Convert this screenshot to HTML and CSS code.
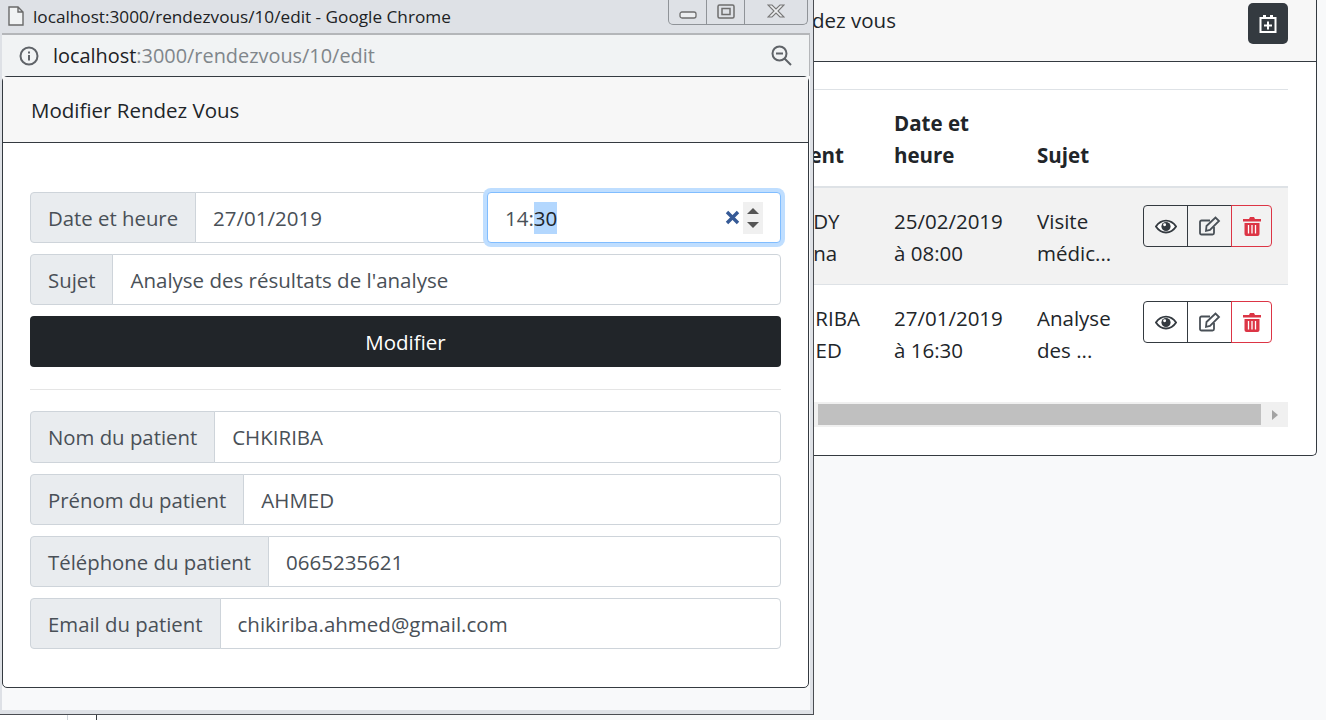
FILE: index.html
```html
<!DOCTYPE html>
<html lang="fr">
<head>
    <meta charset="UTF-8">
    <title>Modifier Rendez Vous</title>
    <link rel="stylesheet" href="styles.css">
</head>
<body>
    <div class="page">
        <aside class="side"><div class="side-cell"></div></aside>
        <main class="main">
            <section class="card list-card">
                <header class="card-header list-header">
                    <span>Les Rendez vous</span>
                    <button class="btn-add">
                        <svg width="18" height="20" viewBox="0 0 18 20">
                            <path d="M1.5 4h15v14h-15z" fill="#343a40" stroke="#fff" stroke-width="2"/>
                            <path d="M4 1h3v4H4zM11 1h3v4h-3z" fill="#fff"/>
                            <path d="M9 7.5v8M5 11.5h8" stroke="#fff" stroke-width="2"/>
                        </svg>
                    </button>
                </header>
                <div class="list-body">
                    <table class="table">
                        <thead>
                            <tr>
                                <th class="col-patient">Patient</th>
                                <th class="col-date">Date et heure</th>
                                <th class="col-subject">Sujet</th>
                                <th class="col-actions"></th>
                            </tr>
                        </thead>
                        <tbody>
                            <tr class="striped">
                                <td>BOUDY Hanina</td>
                                <td>25/02/2019 à 08:00</td>
                                <td>Visite médic...</td>
                                <td class="cell-actions">
                                    <div class="btn-group">
                                        <button class="btn-icon"><svg width="22" height="15" viewBox="0 0 24 16"><use href="#i-eye"/></svg></button>
                                        <button class="btn-icon"><svg width="22" height="20" viewBox="0 0 22 20"><use href="#i-edit"/></svg></button>
                                        <button class="btn-icon danger"><svg width="18" height="20" viewBox="0 0 18 20"><use href="#i-trash"/></svg></button>
                                    </div>
                                </td>
                            </tr>
                            <tr>
                                <td>CHKIRIBA AHMED</td>
                                <td>27/01/2019 à 16:30</td>
                                <td>Analyse des ...</td>
                                <td class="cell-actions">
                                    <div class="btn-group">
                                        <button class="btn-icon"><svg width="22" height="15" viewBox="0 0 24 16"><use href="#i-eye"/></svg></button>
                                        <button class="btn-icon"><svg width="22" height="20" viewBox="0 0 22 20"><use href="#i-edit"/></svg></button>
                                        <button class="btn-icon danger"><svg width="18" height="20" viewBox="0 0 18 20"><use href="#i-trash"/></svg></button>
                                    </div>
                                </td>
                            </tr>
                        </tbody>
                    </table>
                    <div class="scrollbar">
                        <div class="scroll-thumb"></div>
                        <div class="scroll-arrow"></div>
                    </div>
                </div>
            </section>
        </main>
    </div>

    <div class="window">
        <div class="titlebar">
            <svg class="file-icon" width="16" height="20" viewBox="0 0 16 20">
                <path d="M1 1h9l5 5v13H1z M10 1v5h5" fill="#f1f3f4" stroke="#6a6a6a" stroke-width="1.4"/>
            </svg>
            <span class="title-text">localhost:3000/rendezvous/10/edit - Google Chrome</span>
            <div class="win-controls">
                <div class="win-btn win-min">
                    <svg width="18" height="8" viewBox="0 0 18 8"><rect x="1" y="1" width="16" height="6" rx="2" fill="#eceef0" stroke="#6e6e6e" stroke-width="1.3"/></svg>
                </div>
                <div class="win-btn">
                    <svg width="18" height="15" viewBox="0 0 18 15"><rect x="1" y="1" width="16" height="13" rx="1.5" fill="none" stroke="#6e6e6e" stroke-width="1.5"/><rect x="5" y="4.5" width="8" height="6" fill="none" stroke="#6e6e6e" stroke-width="1.5"/></svg>
                </div>
                <div class="win-btn win-close">
                    <svg width="18" height="14" viewBox="0 0 18 14"><path d="M1 1h4l4 4 4-4h4l-6 6 6 6h-4l-4-4-4 4H1l6-6z" fill="#eceef0" stroke="#777" stroke-width="1.1"/></svg>
                </div>
            </div>
        </div>
        <div class="viewport">
            <div class="addressbar">
                <svg class="info-icon" width="20" height="20" viewBox="0 0 20 20">
                    <circle cx="10" cy="10" r="8.5" fill="none" stroke="#5f6368" stroke-width="2"/>
                    <path d="M10 9v5.5M10 5.5v2" stroke="#5f6368" stroke-width="2"/>
                </svg>
                <span class="url"><span class="url-host">localhost</span>:3000/rendezvous/10/edit</span>
                <svg class="zoom-icon" width="21" height="21" viewBox="0 0 21 21">
                    <circle cx="8.5" cy="8.5" r="7" fill="none" stroke="#5f6368" stroke-width="2"/>
                    <path d="M5 8.5h7M13.5 13.5l6.5 6.5" stroke="#5f6368" stroke-width="2"/>
                </svg>
            </div>
            <section class="card edit-card">
                <header class="card-header edit-header">Modifier Rendez Vous</header>
                <div class="edit-body">
                    <div class="input-group">
                        <span class="addon">Date et heure</span>
                        <input class="field" type="text" value="27/01/2019">
                        <div class="field time-field">
                            <span>14:<span class="selected">30</span></span>
                            <svg class="clear-icon" width="15" height="15" viewBox="0 0 15 15">
                                <path d="M2 2l11 11M13 2L2 13" stroke="#365a96" stroke-width="3.4"/>
                            </svg>
                            <div class="spinner">
                                <span class="spin-up"></span>
                                <span class="spin-down"></span>
                            </div>
                        </div>
                    </div>
                    <div class="input-group">
                        <span class="addon">Sujet</span>
                        <input class="field" type="text" value="Analyse des résultats de l'analyse">
                    </div>
                    <button class="btn-submit">Modifier</button>
                    <hr class="divider">
                    <div class="input-group tall">
                        <span class="addon">Nom du patient</span>
                        <input class="field" type="text" value="CHKIRIBA">
                    </div>
                    <div class="input-group">
                        <span class="addon">Prénom du patient</span>
                        <input class="field" type="text" value="AHMED">
                    </div>
                    <div class="input-group">
                        <span class="addon">Téléphone du patient</span>
                        <input class="field" type="text" value="0665235621">
                    </div>
                    <div class="input-group">
                        <span class="addon">Email du patient</span>
                        <input class="field" type="text" value="chikiriba.ahmed@gmail.com">
                    </div>
                </div>
            </section>
        </div>
    </div>

    <svg class="icon-defs" width="0" height="0">
        <defs>
            <g id="i-eye">
                <path d="M1 8C4 3.5 8 1.5 12 1.5S20 3.5 23 8c-3 4.5-7 6.5-11 6.5S4 12.500 1 8z" fill="#fff" stroke="#343a40" stroke-width="2"/>
                <circle cx="12" cy="8" r="5" fill="#343a40"/>
                <circle cx="10.500" cy="6" r="1.600" fill="#fff"/>
            </g>
            <g id="i-edit">
                <path d="M15 11v6a1.500 1.500 0 0 1-1.500 1.500h-11A1.500 1.500 0 0 1 1 17V6a1.500 1.500 0 0 1 1.500-1.500H11" fill="none" stroke="#495057" stroke-width="1.800"/>
                <path d="M7.500 10l9-8.500 3.500 3.500-9 9-4 .8z" fill="none" stroke="#495057" stroke-width="1.800"/>
            </g>
            <g id="i-trash">
                <path d="M0 3h6l1-2h4l1 2h6v2.500H0z" fill="#dc3545"/>
                <path d="M1.500 7h15v11a2 2 0 0 1-2 2h-11a2 2 0 0 1-2-2z" fill="#dc3545"/>
                <path d="M5.500 9v8.500M9 9v8.500M12.500 9v8.500" stroke="#fff" stroke-width="1.300"/>
            </g>
        </defs>
    </svg>
</body>
</html>
```

FILE: styles.css
```css
* {
    box-sizing: border-box;
}

html,
body {
    margin: 0;
    height: 720px;
    overflow: hidden;
}

body {
    font-family: "Open Sans", "Noto Sans", sans-serif;
    font-size: 20.5px;
    line-height: 32px;
    color: #212529;
    background-color: #f8f9fa;
    position: relative;
}

.icon-defs {
    display: block;
}

/* page behind the popup */
.page {
    display: flex;
    height: 720px;
}

.side {
    width: 97px;
    background-color: #fff;
    border-right: 1px solid #343a40;
}

.side-cell {
    width: 68px;
    height: 100%;
    border-right: 1px solid #ced4da;
}

.main {
    flex: 1;
    padding: 0 9px 0 625px;
}

.card {
    background-color: #fff;
    border: 1px solid #343a40;
    border-radius: 5px;
}

.card-header {
    background-color: #f7f7f7;
    border-bottom: 1px solid #343a40;
}

.list-card {
    border-top: none;
    border-radius: 0 0 5px 5px;
    height: 456px;
}

.list-header {
    height: 62px;
    display: flex;
    justify-content: space-between;
    padding: 3px 28px 0 15px;
    line-height: 34px;
}

.btn-add {
    width: 40px;
    height: 41px;
    padding: 0;
    background-color: #343a40;
    border: none;
    border-radius: 5px;
    display: flex;
    align-items: center;
    justify-content: center;
}

.list-body {
    padding: 27px 28px 0;
}

.table {
    width: 537px;
    border-collapse: collapse;
    table-layout: fixed;
    border-top: 1px solid #dee2e6;
}

.table th,
.table td {
    padding: 17px 15px 15px;
    text-align: left;
    vertical-align: top;
}

.table th {
    vertical-align: bottom;
    font-weight: 700;
    border-bottom: 2px solid #dee2e6;
}

.table th:first-child,
.table td:first-child {
    padding-left: 18px;
}

.table tbody tr + tr td {
    border-top: 1px solid #dee2e6;
}

.table .cell-actions {
    padding-top: 16px;
}

.striped {
    background-color: #f2f2f2;
}

.col-patient {
    width: 128px;
}

.col-date {
    width: 143px;
}

.col-subject {
    width: 106px;
}

.col-actions {
    width: 160px;
}

.btn-group {
    display: flex;
    width: 129px;
    height: 42px;
}

.striped .btn-group {
    margin-top: 1px;
}

.btn-icon {
    flex: none;
    width: 45px;
    padding: 0;
    background: none;
    border: 1px solid #343a40;
    margin-left: -1px;
    display: flex;
    align-items: center;
    justify-content: center;
}

.btn-icon:first-child {
    margin-left: 0;
    border-radius: 4px 0 0 4px;
}

.btn-icon.danger {
    flex: 1;
    width: auto;
    border-color: #dc3545;
    border-radius: 0 4px 4px 0;
}

.scrollbar {
    width: 537px;
    height: 25px;
    margin-top: 21px;
    padding: 2px 0 2px 67px;
    background-color: #f0f0f0;
    display: flex;
    align-items: center;
}

.scroll-thumb {
    width: 443px;
    height: 21px;
    background-color: #c0c0c0;
}

.scroll-arrow {
    margin-left: 11px;
    border-left: 6px solid #a3a3a3;
    border-top: 5px solid transparent;
    border-bottom: 5px solid transparent;
}

/* popup window */
.window {
    position: absolute;
    top: 0;
    left: 0;
    width: 814px;
    height: 715px;
    display: flex;
    flex-direction: column;
    background-color: #dee1e6;
    border-right: 1px solid #4a4d52;
    border-bottom: 1px solid #4a4d52;
}

.titlebar {
    height: 33px;
    display: flex;
    align-items: flex-start;
    flex-shrink: 0;
    color: #202124;
}

.file-icon {
    margin: 6px 0 0 8px;
}

.title-text {
    font-size: 17.2px;
    line-height: 20px;
    margin: 7px 0 0 9px;
}

.win-controls {
    display: flex;
    margin-left: auto;
    margin-right: 5px;
    height: 25px;
    width: 140px;
    border: 1px solid #8f9398;
    border-top: none;
    border-radius: 0 0 5px 5px;
}

.win-btn {
    width: 38px;
    display: flex;
    align-items: center;
    justify-content: center;
    padding-bottom: 2px;
    border-right: 1px solid #8f9398;
}

.win-min {
    align-items: flex-end;
    padding-bottom: 5px;
}

.win-close {
    flex: 1;
    border-right: none;
}

.viewport {
    flex: 1;
    margin: 0 3px 4px 2px;
    background-color: #f8f9fa;
}

.addressbar {
    height: 43px;
    display: flex;
    align-items: center;
    padding: 0 17px;
    background-color: #f1f3f4;
    border-top: 2px solid #b4b6b9;
    border-right: 1px solid #b4b6b9;
}

.url {
    margin-left: 14px;
    font-size: 19.9px;
    color: #80868b;
}

.url-host {
    color: #202124;
}

.zoom-icon {
    margin-left: auto;
}

.edit-card {
    width: 807px;
    height: 612px;
}

.edit-header {
    height: 66px;
    padding: 0 28px;
    line-height: 67px;
}

.edit-body {
    padding: 49px 27px 0;
}

.input-group {
    display: flex;
    height: 51px;
    margin-bottom: 11px;
    color: #495057;
}

.tall {
    height: 52px;
}

.addon {
    padding: 0 17px;
    font-size: 20.35px;
    line-height: 50px;
    background-color: #e9ecef;
    border: 1px solid #ced4da;
    border-radius: 4px 0 0 4px;
    white-space: nowrap;
}

.field {
    flex: 1;
    min-width: 0;
    margin-left: -1px;
    padding: 0 17px;
    font: inherit;
    color: inherit;
    background-color: #fff;
    border: 1px solid #ced4da;
    border-radius: 0 4px 4px 0;
    outline: none;
}

.time-field {
    flex: none;
    width: 294px;
    display: flex;
    align-items: center;
    border-color: #80bdff;
    box-shadow: 0 0 0 4px #bfdeff;
    border-radius: 4px;
    padding: 0 17px;
    position: relative;
}

.selected {
    display: inline-block;
    background-color: #b3d7fe;
    color: #212529;
}

.clear-icon {
    margin-left: auto;
}

.spinner {
    width: 20px;
    height: 32px;
    margin-left: 3px;
    background-color: #f0f0f0;
    display: flex;
    flex-direction: column;
    align-items: center;
    justify-content: center;
    gap: 8px;
}

.spin-up {
    border-left: 6px solid transparent;
    border-right: 6px solid transparent;
    border-bottom: 6px solid #555;
}

.spin-down {
    border-left: 6px solid transparent;
    border-right: 6px solid transparent;
    border-top: 6px solid #555;
}

.btn-submit {
    display: block;
    width: 100%;
    height: 51px;
    padding: 0;
    font: inherit;
    color: #fff;
    background-color: #212529;
    border: none;
    border-radius: 4px;
}

.divider {
    margin: 22px 0 21px;
    border: none;
    border-top: 1px solid #e5e5e5;
}
```
